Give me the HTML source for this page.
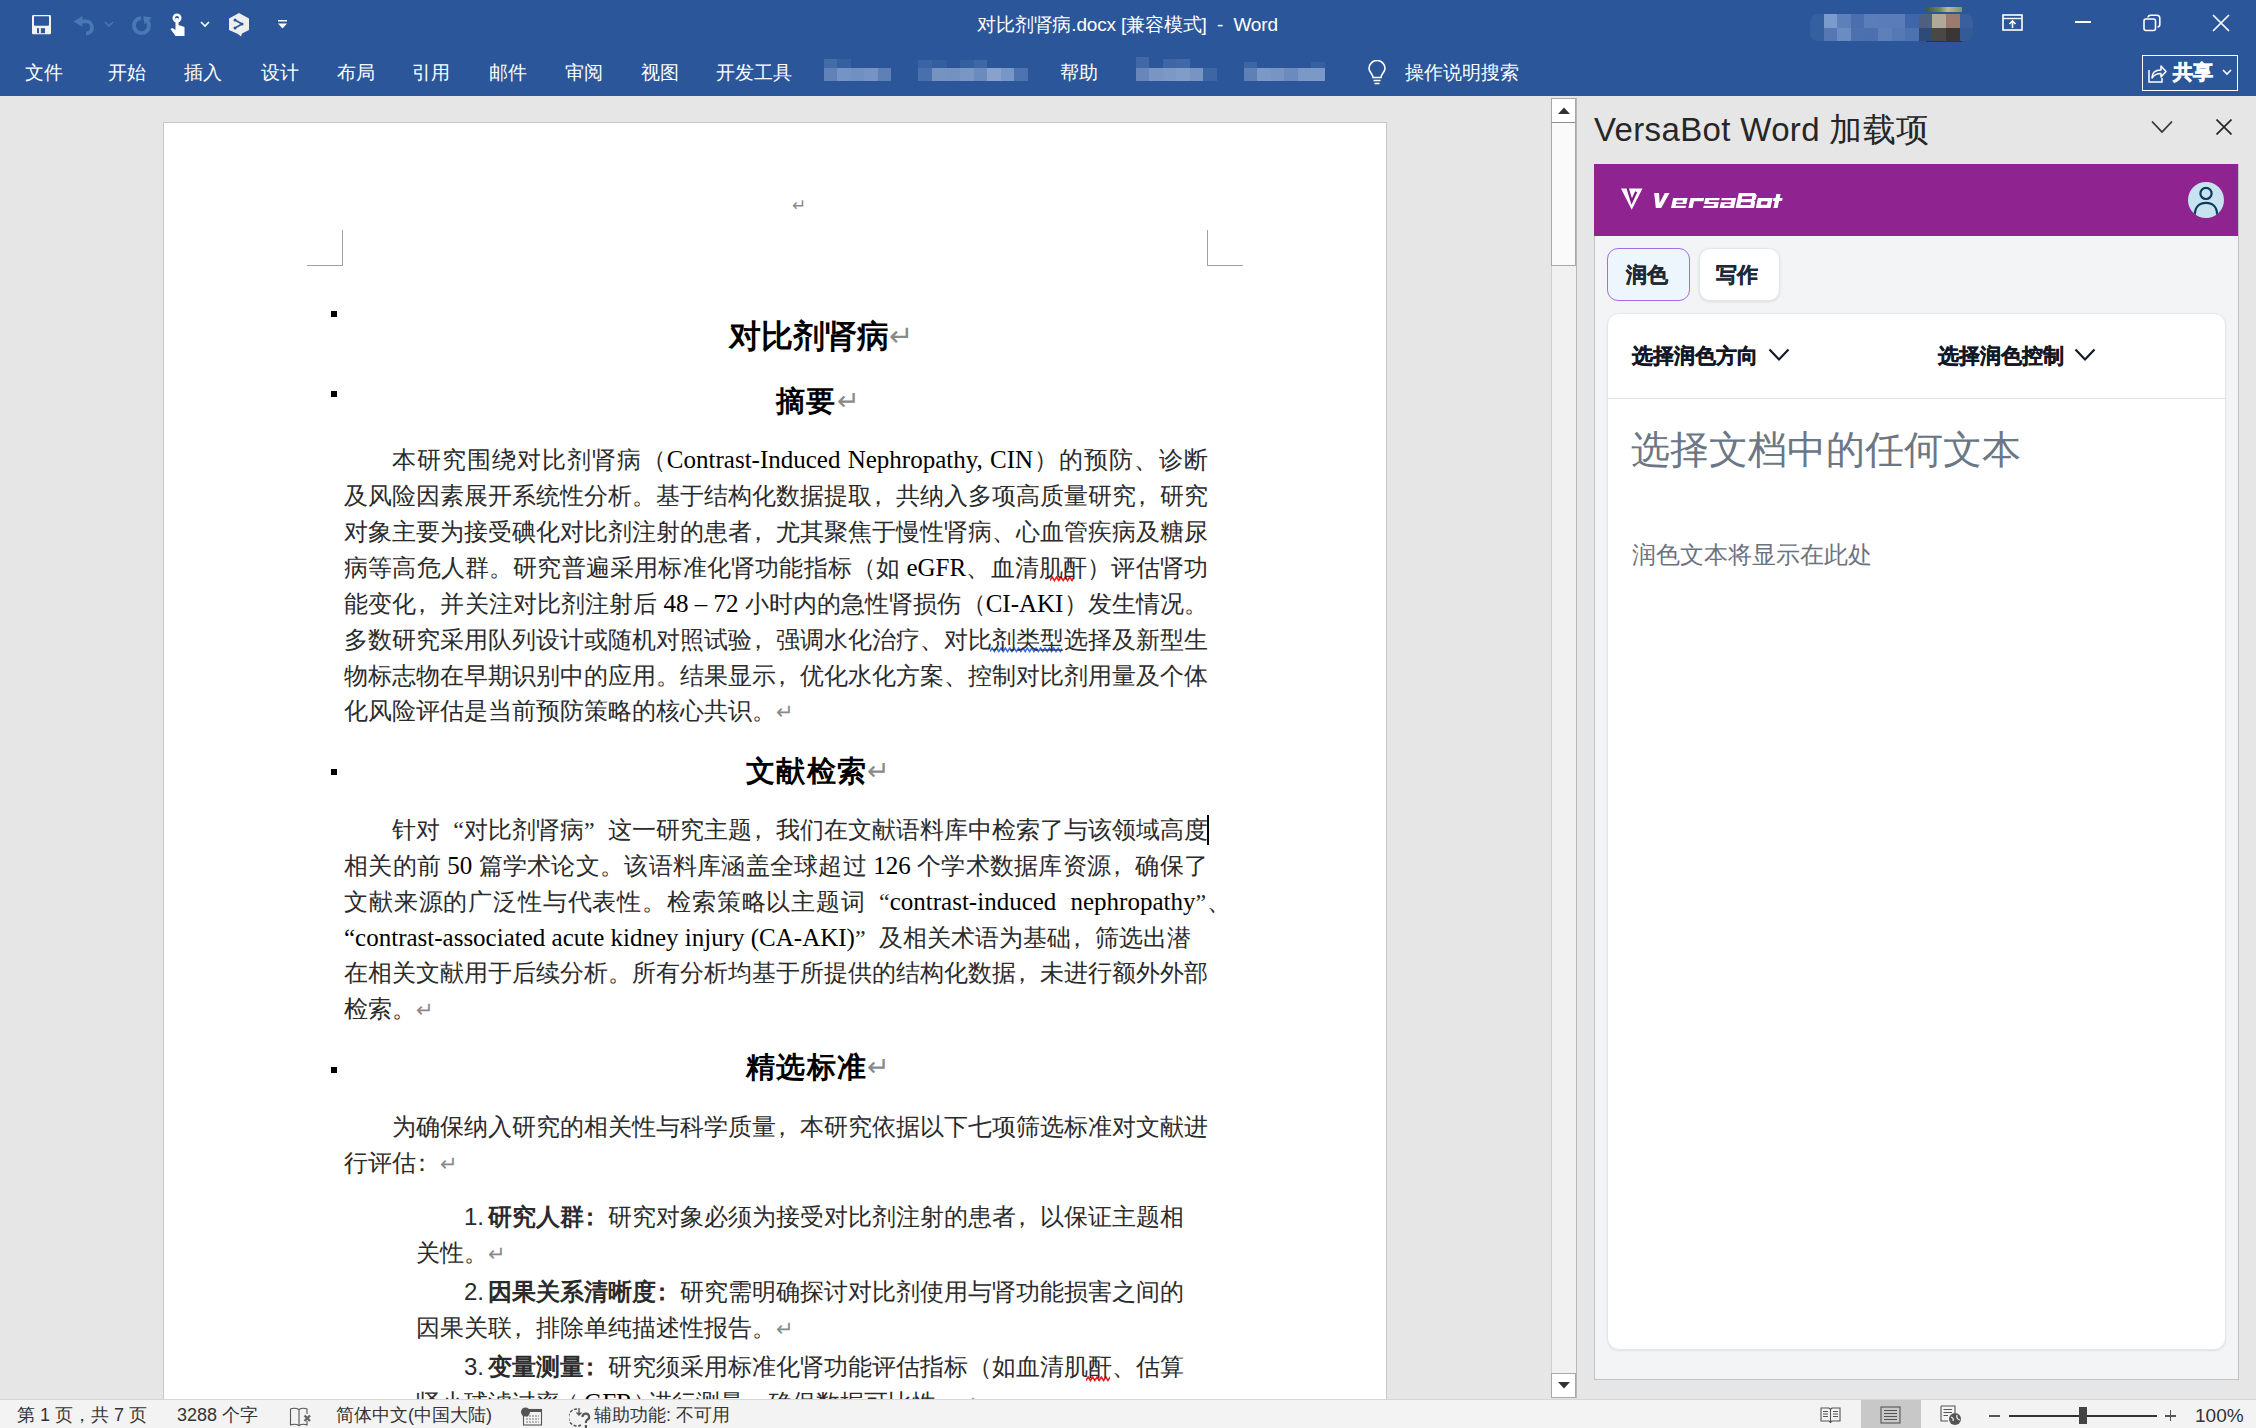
<!DOCTYPE html>
<html><head><meta charset="utf-8">
<style>
*{margin:0;padding:0;box-sizing:border-box}
html,body{width:2256px;height:1428px;overflow:hidden;background:#e6e6e6;font-family:"Liberation Sans",sans-serif}
.a{position:absolute}
#top{left:0;top:0;width:2256px;height:96px;background:#2b579a;color:#fff}
.tab{position:absolute;top:62.4px;font-size:18.6px;line-height:22px;color:#fff;white-space:nowrap}
.blur{position:absolute;top:57px;height:24px}
#doc{left:0;top:96px;width:1551px;height:1303px;background:#e6e6e6;overflow:hidden}
#page{left:163px;top:26px;width:1224px;height:1400px;background:#fff;border:1px solid #c6c6c6}
.ln{position:absolute;font-family:"Liberation Serif",serif;font-size:24px;line-height:36px;color:#2b2b2b;white-space:nowrap}
.j{white-space:normal;text-align:justify;text-align-last:justify;height:36px;overflow:visible}
.L{font-size:25px;color:#000}
.pc{position:relative;left:-6px}
.qo{display:inline-block;width:24px;text-align:right;text-align-last:right}
.qc{display:inline-block;width:24px;text-align:left;text-align-last:left}
.pm{color:#8a8a8a;font-family:"Liberation Sans",sans-serif}
.h{position:absolute;font-family:"Liberation Sans",sans-serif;font-weight:bold;color:#000;white-space:nowrap}
.bul{position:absolute;width:6px;height:6px;background:#000}
#status{left:0;top:1399px;width:2256px;height:29px;background:#f3f3f3;border-top:1px solid #d6d6d6;color:#333;font-size:18px}
.st{position:absolute;top:4px;line-height:22px;white-space:nowrap}
#pane{left:1577px;top:96px;width:679px;height:1303px;background:#e6e6e6}
</style></head><body>
<div id="top" class="a">
 <!-- QAT icons -->
 <svg class="a" style="left:30px;top:13px" width="24" height="24" viewBox="0 0 24 24"><rect x="2" y="2" width="19" height="19.3" rx="1.3" fill="#f4f2ee"/><path d="M4 3.2 H19 V11.8 Q19 12.8 18 12.8 H5 Q4 12.8 4 11.8 Z" fill="#2b579a"/><rect x="7" y="15.2" width="8" height="5" fill="#2b579a"/><rect x="9" y="15.2" width="1.9" height="5" fill="#f4f2ee"/></svg>
 <svg class="a" style="left:72px;top:14px" width="26" height="24" viewBox="0 0 26 24"><path d="M1.5 7.4 L10.4 2 V12.8 Z" fill="#4a78b5"/><path d="M8 7.4 H14 A6 6 0 0 1 14 19.4" stroke="#4a78b5" stroke-width="3.8" fill="none"/></svg>
 <svg class="a" style="left:104px;top:20px" width="10" height="8" viewBox="0 0 10 8"><path d="M1 2 L5 6 L9 2" stroke="#4a78b5" stroke-width="1.5" fill="none"/></svg>
 <svg class="a" style="left:130px;top:14px" width="24" height="24" viewBox="0 0 24 24"><path d="M10.85 4.03 A7.5 7.5 0 1 0 15.8 5.36" stroke="#4a78b5" stroke-width="3.8" fill="none"/><path d="M13.3 2.3 L21.6 3.5 L14.5 10.6 Z" fill="#4a78b5"/></svg>
 <svg class="a" style="left:170px;top:13px" width="20" height="23" viewBox="0 0 20 23"><circle cx="7" cy="5" r="4.5" fill="#fff"/><circle cx="7" cy="5" r="2" fill="#2b579a"/><path d="M5.5 5 h3 v7 l6 2 v9 h-9 l-5 -7 l2 -1 l3 2 z" fill="#fff"/></svg>
 <svg class="a" style="left:200px;top:20px" width="10" height="8" viewBox="0 0 10 8"><path d="M1 2 L5 6 L9 2" stroke="#fff" stroke-width="1.6" fill="none"/></svg>
 <svg class="a" style="left:228px;top:12px" width="22" height="25" viewBox="0 0 22 25"><path d="M11 1 L21 6.5 V18 L14 21.5 L13 24.5 L10 22 L1 18 V6.5 Z" fill="#eee"/><path d="M7 8 L14 12 L7 16" stroke="#2b579a" stroke-width="1.6" fill="none"/><circle cx="7" cy="8" r="1.5" fill="#2b579a"/><circle cx="14" cy="12" r="1.5" fill="#2b579a"/><circle cx="7" cy="16" r="1.5" fill="#2b579a"/></svg>
 <svg class="a" style="left:277px;top:20px" width="12" height="10" viewBox="0 0 12 10"><rect x="1" y="0" width="9" height="1.5" fill="#fff"/><path d="M1 3.5 H10 L5.5 8.5 Z" fill="#fff"/></svg>
 <div class="a" style="left:977px;top:12px;font-size:19px;line-height:26px;white-space:nowrap;letter-spacing:-0.15px">对比剂肾病.docx [兼容模式]&nbsp; -&nbsp; Word</div>
 <!-- mosaic avatar -->
 <div class="a" style="left:1810px;top:14px;width:163px;height:27px;border-radius:8px;overflow:hidden;display:grid;grid-template-columns:repeat(12,13.6px);grid-template-rows:13.5px 13.5px">
  <i style="background:#34609f"></i><i style="background:#7a9bcb"></i><i style="background:#5d80ba"></i><i style="background:#4a6fae"></i><i style="background:#5b7eba"></i><i style="background:#5a7dba"></i><i style="background:#5a7db9"></i><i style="background:#3f66a8"></i><i style="background:#4d6080"></i><i style="background:#b0a898"></i><i style="background:#9c7a6e"></i><i style="background:#3a5f9e"></i>
  <i style="background:#34609f"></i><i style="background:#5578b4"></i><i style="background:#6a8cc2"></i><i style="background:#4d71af"></i><i style="background:#4b70af"></i><i style="background:#5d80bb"></i><i style="background:#5579b6"></i><i style="background:#4c72b0"></i><i style="background:#2e4a78"></i><i style="background:#4a4845"></i><i style="background:#3a3638"></i><i style="background:#345a98"></i>
 </div>
 <div class="a" style="left:1926px;top:7px;width:36px;height:5px;background:linear-gradient(90deg,#3d5a3a,#6f8d5a 40%,#c8b39a 60%,#7a9a60)"></div>
 <div class="a" style="left:1926px;top:41px;width:36px;height:1px;background:#333"></div>
 <!-- window controls -->
 <svg class="a" style="left:2002px;top:14px" width="22" height="18" viewBox="0 0 22 18"><rect x="1" y="1" width="19" height="15" stroke="#fff" stroke-width="1.6" fill="none"/><path d="M1 4.5 H20" stroke="#fff" stroke-width="1.4"/><path d="M10.5 14 V7 M7.5 10 L10.5 7 L13.5 10" stroke="#fff" stroke-width="1.6" fill="none"/></svg>
 <div class="a" style="left:2075px;top:21px;width:16px;height:2px;background:#fff"></div>
 <svg class="a" style="left:2143px;top:14px" width="18" height="18" viewBox="0 0 18 18"><rect x="1" y="5" width="11.5" height="11.5" rx="2" stroke="#fff" stroke-width="1.6" fill="none"/><path d="M5 3.5 A2.5 2.5 0 0 1 7.5 1.2 H14 A3 3 0 0 1 16.8 4 V10.5 A2.5 2.5 0 0 1 14.5 13" stroke="#fff" stroke-width="1.6" fill="none"/></svg>
 <svg class="a" style="left:2212px;top:14px" width="18" height="18" viewBox="0 0 18 18"><path d="M1 1 L17 17 M17 1 L1 17" stroke="#fff" stroke-width="1.7"/></svg>
 <!-- tabs -->
 <div class="tab" style="left:25px">文件</div>
 <div class="tab" style="left:108px">开始</div>
 <div class="tab" style="left:184px">插入</div>
 <div class="tab" style="left:261px">设计</div>
 <div class="tab" style="left:337px">布局</div>
 <div class="tab" style="left:412px">引用</div>
 <div class="tab" style="left:489px">邮件</div>
 <div class="tab" style="left:565px">审阅</div>
 <div class="tab" style="left:641px">视图</div>
 <div class="tab" style="left:716px">开发工具</div>
 <div class="tab" style="left:1060px">帮助</div>
 <div class="tab" style="left:1405px">操作说明搜索</div>
 <!-- blurred tabs -->
 <div class="a" style="left:824px;top:59px;width:13px;height:9px;background:#456ba8"></div><div class="a" style="left:824px;top:68px;width:13px;height:13px;background:#6182b9"></div><div class="a" style="left:837px;top:59px;width:14px;height:9px;background:#3461a0"></div><div class="a" style="left:837px;top:68px;width:14px;height:13px;background:#7593c4"></div><div class="a" style="left:851px;top:68px;width:13px;height:13px;background:#7190c2"></div><div class="a" style="left:864px;top:68px;width:14px;height:13px;background:#7593c4"></div><div class="a" style="left:878px;top:68px;width:13px;height:13px;background:#5f80b7"></div>
 <div class="a" style="left:918px;top:60px;width:14px;height:8px;background:#3a64a3"></div><div class="a" style="left:918px;top:68px;width:14px;height:13px;background:#4870ac"></div><div class="a" style="left:932px;top:60px;width:15px;height:8px;background:#335f9f"></div><div class="a" style="left:932px;top:68px;width:15px;height:13px;background:#7593c1"></div><div class="a" style="left:947px;top:68px;width:13px;height:13px;background:#7392c2"></div><div class="a" style="left:960px;top:60px;width:14px;height:8px;background:#3560a0"></div><div class="a" style="left:960px;top:68px;width:14px;height:13px;background:#7a96c4"></div><div class="a" style="left:974px;top:60px;width:13px;height:8px;background:#3f67a5"></div><div class="a" style="left:974px;top:68px;width:13px;height:13px;background:#6c8bbd"></div><div class="a" style="left:987px;top:68px;width:14px;height:13px;background:#88a2cd"></div><div class="a" style="left:1001px;top:68px;width:13px;height:13px;background:#7896c6"></div><div class="a" style="left:1014px;top:68px;width:14px;height:13px;background:#4d73b0"></div>
 <div class="a" style="left:1136px;top:57px;width:13px;height:11px;background:#4269a6"></div><div class="a" style="left:1136px;top:68px;width:13px;height:13px;background:#6886bb"></div><div class="a" style="left:1149px;top:68px;width:14px;height:13px;background:#7995c4"></div><div class="a" style="left:1163px;top:59px;width:13px;height:9px;background:#3f66a5"></div><div class="a" style="left:1163px;top:68px;width:13px;height:13px;background:#7c98c6"></div><div class="a" style="left:1176px;top:59px;width:14px;height:9px;background:#4169a7"></div><div class="a" style="left:1176px;top:68px;width:14px;height:13px;background:#809cc8"></div><div class="a" style="left:1190px;top:68px;width:13px;height:13px;background:#7794c3"></div><div class="a" style="left:1203px;top:68px;width:14px;height:13px;background:#3e66a4"></div>
 <div class="a" style="left:1244px;top:62px;width:13px;height:6px;background:#3e66a4"></div><div class="a" style="left:1244px;top:68px;width:13px;height:13px;background:#5f80b6"></div><div class="a" style="left:1257px;top:68px;width:14px;height:13px;background:#7c98c7"></div><div class="a" style="left:1271px;top:68px;width:13px;height:13px;background:#7794c3"></div><div class="a" style="left:1284px;top:68px;width:14px;height:13px;background:#6b8abd"></div><div class="a" style="left:1298px;top:68px;width:13px;height:13px;background:#7c98c7"></div><div class="a" style="left:1311px;top:62px;width:14px;height:6px;background:#3561a0"></div><div class="a" style="left:1311px;top:68px;width:14px;height:13px;background:#7c98c7"></div>
 <svg class="a" style="left:1366px;top:60px" width="22" height="26" viewBox="0 0 22 26"><path d="M7 17.5 C7 14 3 12 3 8.5 A8 8 0 0 1 19 8.5 C19 12 15 14 15 17.5 Z" stroke="#fff" stroke-width="1.6" fill="none"/><path d="M7.5 20.5 H14.5 M8.5 23.5 H13.5" stroke="#fff" stroke-width="1.6"/></svg>
 <!-- share -->
 <div class="a" style="left:2142px;top:55px;width:96px;height:36px;border:1px solid #fff"></div>
 <svg class="a" style="left:2147px;top:62px" width="20" height="22" viewBox="0 0 20 22"><path d="M2 8 V20 H15 V16" stroke="#fff" stroke-width="1.5" fill="none"/><path d="M5 16 C5 10 9 8 14 8 V4 L19 9.5 L14 15 V11.5 C10 11.5 7 13 5 16 Z" stroke="#fff" stroke-width="1.5" fill="none" stroke-linejoin="round"/></svg>
 <div class="a" style="left:2173px;top:60px;font-size:20px;line-height:24px;font-weight:bold;-webkit-text-stroke:0.7px #fff">共享</div>
 <svg class="a" style="left:2222px;top:68px" width="10" height="8" viewBox="0 0 10 8"><path d="M1 2 L5 6 L9 2" stroke="#fff" stroke-width="1.6" fill="none"/></svg>
</div>
<div id="doc" class="a">
 <div id="page" class="a"></div>
</div>
<div id="txt" class="a" style="left:0;top:0;width:1551px;height:1399px;overflow:hidden">
 <div class="ln pm" style="left:792px;top:188px;font-size:17px">↵</div>
<svg class="a" style="left:1050px;top:576px" width="24" height="6" viewBox="0 0 24 6"><path d="M0 4.5 L2.2 1 L4.4 4.5 L6.6 1 L8.8 4.5 L11.0 1 L13.2 4.5 L15.4 1 L17.6 4.5 L19.8 1 L22.0 4.5 L24.2 1" stroke="#f01818" stroke-width="1.5" fill="none"/></svg>
<svg class="a" style="left:990px;top:647px" width="72" height="6" viewBox="0 0 72 6"><path d="M0 4.5 L2.2 1 L4.4 4.5 L6.6 1 L8.8 4.5 L11.0 1 L13.2 4.5 L15.4 1 L17.6 4.5 L19.8 1 L22.0 4.5 L24.2 1 L26.4 4.5 L28.6 1 L30.8 4.5 L33.0 1 L35.2 4.5 L37.4 1 L39.6 4.5 L41.8 1 L44.0 4.5 L46.2 1 L48.4 4.5 L50.6 1 L52.8 4.5 L55.0 1 L57.2 4.5 L59.4 1 L61.6 4.5 L63.8 1 L66.0 4.5 L68.2 1 L70.4 4.5 L72.6 1" stroke="#3a6ee8" stroke-width="1.5" fill="none"/></svg>
<svg class="a" style="left:1086px;top:1376px" width="24" height="6" viewBox="0 0 24 6"><path d="M0 4.5 L2.2 1 L4.4 4.5 L6.6 1 L8.8 4.5 L11.0 1 L13.2 4.5 L15.4 1 L17.6 4.5 L19.8 1 L22.0 4.5 L24.2 1" stroke="#f01818" stroke-width="1.5" fill="none"/></svg>

 <div class="a" style="left:342px;top:230px;width:1px;height:36px;background:#a0a0a0"></div>
 <div class="a" style="left:307px;top:265px;width:36px;height:1px;background:#a0a0a0"></div>
 <div class="a" style="left:1207px;top:230px;width:1px;height:36px;background:#a0a0a0"></div>
 <div class="a" style="left:1207px;top:265px;width:36px;height:1px;background:#a0a0a0"></div>
 <div class="bul" style="left:331px;top:311px"></div>
 <div class="bul" style="left:331px;top:391px"></div>
 <div class="bul" style="left:331px;top:769px"></div>
 <div class="bul" style="left:331px;top:1067px"></div>
 <div class="h" style="left:728.5px;top:316px;font-size:31.6px;line-height:40px">对比剂肾病<span class="pm" style="font-weight:normal;font-size:29px;vertical-align:1px">↵</span></div>
 <div class="h" style="left:776px;top:382px;font-size:29px;line-height:38px;letter-spacing:1.3px">摘要<span class="pm" style="font-weight:normal;font-size:27px;vertical-align:1px">↵</span></div>
 <div class="h" style="left:746px;top:752px;font-size:29px;line-height:38px;letter-spacing:1.3px">文献检索<span class="pm" style="font-weight:normal;font-size:27px;vertical-align:1px">↵</span></div>
 <div class="h" style="left:746px;top:1048px;font-size:29px;line-height:38px;letter-spacing:1.3px">精选标准<span class="pm" style="font-weight:normal;font-size:27px;vertical-align:1px">↵</span></div>

 <div class="ln j" style="left:392px;top:442px;width:816px">本研究围绕对比剂肾病（<span class="L">Contrast-Induced Nephropathy, CIN</span>）的预防、诊断</div>
 <div class="ln j" style="left:344px;top:478px;width:864px">及风险因素展开系统性分析。基于结构化数据提取<span class="pc">，</span>共纳入多项高质量研究<span class="pc">，</span>研究</div>
 <div class="ln j" style="left:344px;top:514px;width:864px">对象主要为接受碘化对比剂注射的患者<span class="pc">，</span>尤其聚焦于慢性肾病、心血管疾病及糖尿</div>
 <div class="ln j" style="left:344px;top:550px;width:864px">病等高危人群。研究普遍采用标准化肾功能指标（如 <span class="L">eGFR</span>、血清肌酐）评估肾功</div>
 <div class="ln j" style="left:344px;top:586px;width:864px">能变化<span class="pc">，</span>并关注对比剂注射后 <span class="L">48 – 72</span> 小时内的急性肾损伤（<span class="L">CI-AKI</span>）发生情况。</div>
 <div class="ln j" style="left:344px;top:622px;width:864px">多数研究采用队列设计或随机对照试验<span class="pc">，</span>强调水化治疗、对比剂类型选择及新型生</div>
 <div class="ln j" style="left:344px;top:658px;width:864px">物标志物在早期识别中的应用。结果显示<span class="pc">，</span>优化水化方案、控制对比剂用量及个体</div>
 <div class="ln" style="left:344px;top:693px">化风险评估是当前预防策略的核心共识。<span class="pm" style="font-size:21px">↵</span></div>

 <div class="ln j" style="left:392px;top:812px;width:816px">针对<span class="qo">“</span>对比剂肾病<span class="qc">”</span>这一研究主题<span class="pc">，</span>我们在文献语料库中检索了与该领域高度</div>
 <div class="a" style="left:1207px;top:815px;width:1.5px;height:30px;background:#000"></div>
 <div class="ln j" style="left:344px;top:848px;width:864px">相关的前 <span class="L">50</span> 篇学术论文。该语料库涵盖全球超过 <span class="L">126</span> 个学术数据库资源<span class="pc">，</span>确保了</div>
 <div class="ln j" style="left:344px;top:884px;width:887px">文献来源的广泛性与代表性。检索策略以主题词<span class="qo">“</span><span class="L">contrast-induced&nbsp; nephropathy</span>”、</div>
 <div class="ln" style="left:344px;top:920px"><span class="L">“contrast-associated acute kidney injury (CA-AKI)</span><span class="qc">”</span>及相关术语为基础<span class="pc">，</span>筛选出潜</div>
 <div class="ln j" style="left:344px;top:955px;width:864px">在相关文献用于后续分析。所有分析均基于所提供的结构化数据<span class="pc">，</span>未进行额外外部</div>
 <div class="ln" style="left:344px;top:991px">检索。<span class="pm" style="font-size:21px">↵</span></div>

 <div class="ln j" style="left:392px;top:1109px;width:816px">为确保纳入研究的相关性与科学质量<span class="pc">，</span>本研究依据以下七项筛选标准对文献进</div>
 <div class="ln" style="left:344px;top:1145px">行评估<span class="pc">：</span><span class="pm" style="font-size:21px">↵</span></div>

 <div class="ln j" style="left:464px;top:1199px;width:720px"><span style="font-family:'Liberation Sans',sans-serif;display:inline-block;width:24px;text-align:left;text-align-last:left">1.</span><b>研究人群<span class="pc">：</span></b>研究对象必须为接受对比剂注射的患者<span class="pc">，</span>以保证主题相</div>
 <div class="ln" style="left:416px;top:1235px">关性。<span class="pm" style="font-size:21px">↵</span></div>
 <div class="ln j" style="left:464px;top:1274px;width:720px"><span style="font-family:'Liberation Sans',sans-serif;display:inline-block;width:24px;text-align:left;text-align-last:left">2.</span><b>因果关系清晰度<span class="pc">：</span></b>研究需明确探讨对比剂使用与肾功能损害之间的</div>
 <div class="ln" style="left:416px;top:1310px">因果关联<span class="pc">，</span>排除单纯描述性报告。<span class="pm" style="font-size:21px">↵</span></div>
 <div class="ln j" style="left:464px;top:1349px;width:720px"><span style="font-family:'Liberation Sans',sans-serif;display:inline-block;width:24px;text-align:left;text-align-last:left">3.</span><b>变量测量<span class="pc">：</span></b>研究须采用标准化肾功能评估指标（如血清肌酐、估算</div>
 <div class="ln" style="left:416px;top:1385px">肾小球滤过率<span style="margin-left:-5px;margin-right:-6px">（</span><span class="L">eGFR</span><span style="margin-right:-9px">）</span>进行测量<span class="pc">，</span>确保数据可比性。<span class="pm" style="font-size:21px">↵</span></div>
</div>
<div id="pane" class="a"></div>
<!-- scrollbar -->
<div class="a" style="left:1551px;top:98px;width:26px;height:1300px;background:#f1f1f1;border-left:1px solid #d0d0d0;border-right:1px solid #b9b9b9"></div>
<div class="a" style="left:1551px;top:98px;width:25px;height:25px;background:#fff;border:1px solid #a8a8a8"></div>
<svg class="a" style="left:1557px;top:106px" width="14" height="9" viewBox="0 0 14 9"><path d="M1 8 L7 1.5 L13 8 Z" fill="#333"/></svg>
<div class="a" style="left:1551px;top:122px;width:25px;height:144px;background:#fafafa;border:1px solid #a8a8a8;border-top:1px solid #8f8f8f"></div>
<div class="a" style="left:1551px;top:1373px;width:25px;height:25px;background:#fff;border:1px solid #a8a8a8"></div>
<svg class="a" style="left:1557px;top:1381px" width="14" height="9" viewBox="0 0 14 9"><path d="M1 1 L7 7.5 L13 1 Z" fill="#333"/></svg>
<!-- pane header -->
<div class="a" style="left:1594px;top:109px;font-size:33px;line-height:42px;color:#262626;white-space:nowrap;letter-spacing:0.35px">VersaBot Word 加载项</div>
<svg class="a" style="left:2151px;top:120px" width="22" height="14" viewBox="0 0 22 14"><path d="M1 1.5 L11 12 L21 1.5" stroke="#333" stroke-width="1.8" fill="none"/></svg>
<svg class="a" style="left:2216px;top:119px" width="16" height="16" viewBox="0 0 16 16"><path d="M0.5 0.5 L15.5 15.5 M15.5 0.5 L0.5 15.5" stroke="#262626" stroke-width="1.7"/></svg>
<!-- addin container -->
<div class="a" style="left:1594px;top:164px;width:645px;height:1216px;background:#f3f4f6;border:1px solid #c2c2c2;border-top:none"></div>
<div class="a" style="left:1594px;top:164px;width:644px;height:72px;background:#8f2390"></div>
<svg class="a" style="left:1610px;top:178px" width="190" height="44" viewBox="0 0 190 44">
 <path d="M11 10.6 H32.5 L21.7 31.8 Z" fill="#fff"/>
 <path d="M17.6 10 L21.7 23.6 L26.2 13.8" stroke="#7e1a80" stroke-width="2.3" fill="none" stroke-linejoin="miter"/>
 <g transform="translate(0,30) skewX(-12)" fill="#fff" fill-rule="evenodd">
  <path d="M41 -15 H45.8 L48.6 -5 L51.6 -15 H56.4 L51.2 0 H45.8 Z"/>
  <path d="M61 -10 H75.5 V-3.9 H65.2 V-2.2 H75.5 V0 H61 Z M65.2 -7.6 H71.4 V-5.5 H65.2 Z"/>
  <path d="M78.4 -10 H92 V-6.7 H82.6 V0 H78.4 Z"/>
  <path d="M93.2 -10 H107.6 V-7.8 H97.4 V-5.9 H107.6 V0 H93.2 V-2.2 H103.4 V-4.1 H93.2 Z"/>
  <path d="M109.6 -10 H124 V0 H109.6 V-5.8 H119.8 V-7.8 H109.6 Z M113.8 -4 H119.8 V-2.2 H113.8 Z"/>
  <path d="M125.6 -15 H141.8 L144 -12.8 V-8.6 L142.4 -7.5 L144 -6.4 V0 H125.6 Z M129.8 -11.8 H139.8 V-9 H129.8 Z M129.8 -5.8 H139.8 V-3 H129.8 Z"/>
  <path d="M145.8 -10 H160.5 V0 H145.8 Z M150 -6.8 H156.3 V-3.2 H150 Z"/>
  <path d="M163.4 -14 H167.6 V-10 H170.6 V-7 H167.6 V0 H163.4 V-7 H161.4 V-10 H163.4 Z"/>
 </g>
</svg>
<div class="a" style="left:2188px;top:182px;width:36px;height:36px;border-radius:50%;background:#c7e3f0;overflow:hidden">
 <svg width="36" height="36" viewBox="0 0 36 36"><circle cx="18" cy="11.4" r="5.6" stroke="#0c3a5c" stroke-width="2.2" fill="none"/><path d="M6.8 33 C6.8 24.5 12 20.8 18 20.8 C24 20.8 29.2 24.5 29.2 33" stroke="#0c3a5c" stroke-width="2.3" fill="none"/></svg>
</div>
<!-- tabs -->
<div class="a" style="left:1607px;top:248px;width:83px;height:53px;border-radius:11px;background:#edf6fc;border:1.5px solid #a56af0"></div>
<div class="a" style="left:1626px;top:262px;font-size:20.5px;line-height:26px;font-weight:bold;color:#1f2937;-webkit-text-stroke:0.4px #1f2937">润色</div>
<div class="a" style="left:1699px;top:248px;width:81px;height:53px;border-radius:11px;background:#fff;border:1px solid #e3e7ec;box-shadow:0 1px 3px rgba(0,0,0,0.10)"></div>
<div class="a" style="left:1716px;top:262px;font-size:20.5px;line-height:26px;font-weight:bold;color:#1f2937;-webkit-text-stroke:0.4px #1f2937">写作</div>
<!-- card -->
<div class="a" style="left:1607px;top:313px;width:619px;height:1037px;border-radius:12px;background:#fff;border:1px solid #e3e6ea;box-shadow:0 1px 2px rgba(0,0,0,0.08)"></div>
<div class="a" style="left:1608px;top:398px;width:617px;height:1px;background:#dfe3e8"></div>
<div class="a" style="left:1632px;top:343px;font-size:20.5px;line-height:26px;font-weight:bold;color:#111827;white-space:nowrap;-webkit-text-stroke:0.4px #111827">选择润色方向</div>
<svg class="a" style="left:1768px;top:348px" width="22" height="14" viewBox="0 0 22 14"><path d="M1.5 1.5 L11 11.5 L20.5 1.5" stroke="#111827" stroke-width="2.2" fill="none"/></svg>
<div class="a" style="left:1938px;top:343px;font-size:20.5px;line-height:26px;font-weight:bold;color:#111827;white-space:nowrap;-webkit-text-stroke:0.4px #111827">选择润色控制</div>
<svg class="a" style="left:2074px;top:348px" width="22" height="14" viewBox="0 0 22 14"><path d="M1.5 1.5 L11 11.5 L20.5 1.5" stroke="#111827" stroke-width="2.2" fill="none"/></svg>
<div class="a" style="left:1631px;top:425px;font-size:39px;line-height:50px;color:#6b7785;white-space:nowrap">选择文档中的任何文本</div>
<div class="a" style="left:1632px;top:539px;font-size:24px;line-height:32px;color:#6b7280;white-space:nowrap">润色文本将显示在此处</div>
<div id="status" class="a">
 <div class="st" style="left:17px">第 1 页，共 7 页</div>
 <div class="st" style="left:177px">3288 个字</div>
 <svg class="a" style="left:289px;top:7px" width="24" height="20" viewBox="0 0 24 20"><path d="M1.5 2 C4 1 7 1 10 2.5 V18.5 C7 17 4 17 1.5 18 Z" stroke="#555" stroke-width="1.1" fill="none"/><path d="M10 2.5 C12.5 1 15.5 1 18 2 V7 M18 14 V18 C15.5 17 12.5 17 10 18.5" stroke="#555" stroke-width="1.1" fill="none"/><path d="M15.5 8.5 L21 14 M21 8.5 L15.5 14" stroke="#666" stroke-width="2.4"/></svg>
 <div class="st" style="left:336px">简体中文(中国大陆)</div>
 <svg class="a" style="left:520px;top:7px" width="23" height="19" viewBox="0 0 23 19"><rect x="3.5" y="2.5" width="18" height="15.5" stroke="#555" stroke-width="1.1" fill="none"/><rect x="3.5" y="2.5" width="18" height="2.5" fill="#555"/><path d="M6 9 H19 M6 12 H19 M6 15 H19" stroke="#777" stroke-width="1" stroke-dasharray="2 1"/><circle cx="5.5" cy="5" r="4.5" fill="#555"/></svg>
 <svg class="a" style="left:569px;top:5px" width="24" height="24" viewBox="0 0 24 24"><path d="M8 4 A8.5 8.5 0 1 0 12 20" stroke="#555" stroke-width="1.5" fill="none" stroke-dasharray="3 1.6"/><path d="M10 3 V10 M7.5 7.5 L10 10 L12.5 7.5" stroke="#555" stroke-width="1.4" fill="none"/><path d="M13.5 12 A3.3 3.3 0 1 1 18 15 Q16.8 16 16.8 18" stroke="#555" stroke-width="2.2" fill="none"/><rect x="15.8" y="20" width="2.2" height="4" fill="#555"/></svg>
 <div class="st" style="left:594px">辅助功能: 不可用</div>
 <svg class="a" style="left:1820px;top:6px" width="21" height="18" viewBox="0 0 21 18"><path d="M1 2 H9 L10.5 3.5 L12 2 H20 V15 H12 L10.5 16.5 L9 15 H1 Z M10.5 3.5 V16.5" stroke="#555" stroke-width="1.1" fill="none"/><path d="M3 5.5 H8 M3 8 H8 M3 10.5 H8 M13 5.5 H18 M13 8 H18 M13 10.5 H18" stroke="#555" stroke-width="1"/></svg>
 <div class="a" style="left:1861px;top:0;width:60px;height:29px;background:#c8c8c8"></div>
 <svg class="a" style="left:1880px;top:6px" width="21" height="18" viewBox="0 0 21 18"><rect x="1" y="1" width="19" height="16" stroke="#555" stroke-width="1.1" fill="none"/><path d="M4 4.5 H17 M4 7.5 H17 M4 10.5 H17 M4 13.5 H17" stroke="#555" stroke-width="1"/></svg>
 <svg class="a" style="left:1940px;top:5px" width="22" height="21" viewBox="0 0 22 21"><path d="M1 1 H15 V8 M1 1 V16 H8" stroke="#555" stroke-width="1.1" fill="none"/><path d="M3.5 4.5 H12 M3.5 7.5 H12 M3.5 10.5 H8" stroke="#555" stroke-width="1"/><circle cx="15" cy="14" r="6" fill="#555"/><path d="M11 12 Q14 13 13 16 M17 10 Q16 14 20 15" stroke="#f3f3f3" stroke-width="1.2" fill="none"/></svg>
 <div class="a" style="left:1989px;top:15px;width:11px;height:1.5px;background:#555"></div>
 <div class="a" style="left:2009px;top:15px;width:148px;height:2px;background:#333"></div>
 <div class="a" style="left:2079px;top:7px;width:8px;height:17px;background:#444"></div>
 <div class="a" style="left:2165px;top:15px;width:11px;height:1.5px;background:#555"></div>
 <div class="a" style="left:2169.8px;top:10px;width:1.5px;height:11px;background:#555"></div>
 <div class="st" style="left:2195px;top:5px;font-size:19px">100%</div>
</div>
</body></html>
